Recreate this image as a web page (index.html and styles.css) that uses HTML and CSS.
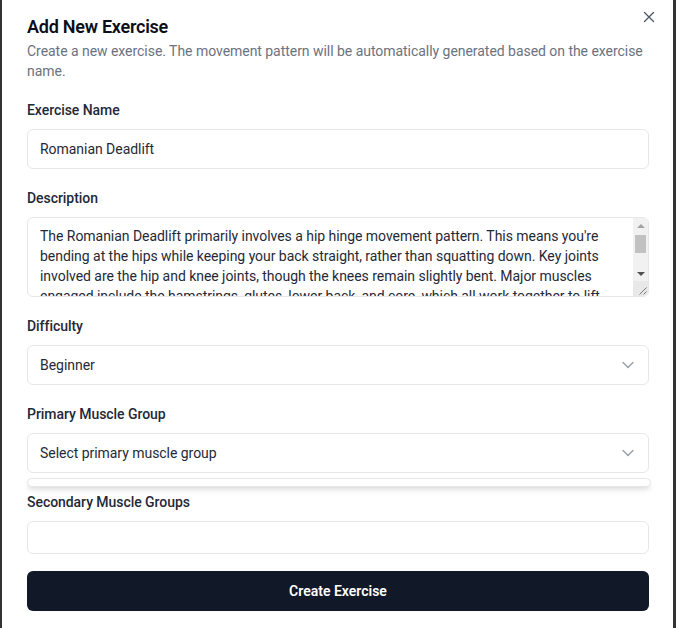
FILE: index.html
```html
<!DOCTYPE html>
<html lang="en">
<head>
<meta charset="utf-8">
<title>Add New Exercise</title>
<link rel="stylesheet" href="styles.css">
</head>
<body>
<div class="backdrop">
  <div class="dialog" role="dialog">
    <button class="close" type="button" aria-label="Close">
      <svg viewBox="0 0 12 12" width="12" height="12"><path d="M1.5 1.5 L10.5 10.5 M10.5 1.5 L1.5 10.5" fill="none" stroke="currentColor" stroke-width="1.3" stroke-linecap="round"/></svg>
    </button>
    <div class="header">
      <h2 class="title">Add New Exercise</h2>
      <p class="subtitle">Create a new exercise. The movement pattern will be automatically generated based on the exercise name.</p>
    </div>
    <form class="form">
      <div class="fields">
        <div class="field">
          <label class="label">Exercise Name</label>
          <input class="input" type="text" value="Romanian Deadlift">
        </div>
        <div class="field">
          <label class="label">Description</label>
          <div class="textarea-wrap">
            <textarea class="textarea">The Romanian Deadlift primarily involves a hip hinge movement pattern. This means you're bending at the hips while keeping your back straight, rather than squatting down. Key joints involved are the hip and knee joints, though the knees remain slightly bent. Major muscles engaged include the hamstrings, glutes, lower back, and core, which all work together to lift the weight and maintain proper form throughout the entire movement.</textarea>
            <div class="sb" aria-hidden="true">
              <div class="sb-btn"><span class="tri-up"></span></div>
              <div class="sb-thumb"></div>
              <div class="sb-space"></div>
              <div class="sb-btn"><span class="tri-down"></span></div>
            </div>
            <div class="resizer" aria-hidden="true">
              <svg viewBox="0 0 15 15" width="15" height="15"><path d="M13.5 6.5 L6.5 13.5 M13.5 10.5 L10.5 13.5" fill="none" stroke="#7a7a7a" stroke-width="1"/></svg>
            </div>
          </div>
        </div>
        <div class="field">
          <label class="label">Difficulty</label>
          <button class="select" type="button">
            <span>Beginner</span>
            <svg class="chev" viewBox="0 0 16 16" width="16" height="16"><path d="M3 5.5 L8 10.5 L13 5.5" fill="none" stroke="currentColor" stroke-width="1.3" stroke-linecap="round" stroke-linejoin="round"/></svg>
          </button>
        </div>
        <div class="field">
          <label class="label">Primary Muscle Group</label>
          <div class="select-wrap">
            <button class="select" type="button">
              <span>Select primary muscle group</span>
              <svg class="chev" viewBox="0 0 16 16" width="16" height="16"><path d="M3 5.5 L8 10.5 L13 5.5" fill="none" stroke="currentColor" stroke-width="1.3" stroke-linecap="round" stroke-linejoin="round"/></svg>
            </button>
            <div class="popover"></div>
          </div>
        </div>
        <div class="field">
          <label class="label">Secondary Muscle Groups</label>
          <div class="multi"></div>
        </div>
      </div>
      <button class="submit" type="button">Create Exercise</button>
    </form>
  </div>
</div>
</body>
</html>
```
FILE: styles.css
```css
* { box-sizing: border-box; }
html, body { margin: 0; padding: 0; }
body {
  background: #333333;
  font-family: Roboto, "Liberation Sans", sans-serif;
  color: #111827;
  height: 628px;
  overflow: hidden;
}
.backdrop {
  padding: 0 3px 0 2px;
}
.dialog {
  position: relative;
  background: #ffffff;
  padding: 18px 24px 24px 25px;
  min-height: 628px;
}
.close {
  position: absolute;
  top: 11px;
  right: 18px;
  width: 12px;
  height: 12px;
  padding: 0;
  border: 0;
  background: none;
  color: #4b5563;
  display: flex;
}
.header { display: flex; flex-direction: column; gap: 5px; }
.title {
  margin: 0;
  font-size: 18px;
  line-height: 18px;
  font-weight: 600;
  letter-spacing: -0.25px;
  color: #0b0f19;
}
.subtitle {
  margin: 0;
  font-size: 14px;
  line-height: 20px;
  color: #6b7280;
  letter-spacing: -0.04px;
}
.form { margin-top: 19px; display: flex; flex-direction: column; }
.fields { display: flex; flex-direction: column; gap: 19px; }
.field { display: flex; flex-direction: column; }
.label {
  font-size: 14px;
  line-height: 21px;
  font-weight: 500;
  margin-bottom: 8px;
  color: #1f2937;
  letter-spacing: -0.05px;
}
.input, .textarea, .select, .multi {
  width: 100%;
  border: 1px solid #e5e7eb;
  border-radius: 6px;
  background: #ffffff;
  font-family: inherit;
  font-size: 14px;
  color: #1f2937;
  letter-spacing: -0.04px;
}
.input { height: 40px; padding: 0 12px; outline: none; }
.textarea-wrap { position: relative; }
.textarea {
  height: 80px;
  padding: 8px 27px 8px 12px;
  line-height: 20px;
  resize: none;
  outline: none;
  overflow: hidden;
  display: block;
}
.sb {
  position: absolute;
  top: 1px;
  right: 1px;
  bottom: 16px;
  width: 15px;
  background: #f1f1f1;
  border-top-right-radius: 5px;
  display: flex;
  flex-direction: column;
}
.sb-btn {
  height: 15px;
  display: flex;
  align-items: center;
  justify-content: center;
  flex: none;
}
.tri-up {
  width: 0; height: 0;
  border-left: 4px solid transparent;
  border-right: 4px solid transparent;
  border-bottom: 4px solid #a3a3a3;
}
.tri-down {
  width: 0; height: 0;
  border-left: 4px solid transparent;
  border-right: 4px solid transparent;
  border-top: 4px solid #505050;
}
.sb-thumb {
  height: 18px;
  margin: 2px 2px 0;
  background: #c1c1c1;
  flex: none;
}
.sb-space { flex: 1; }
.resizer {
  position: absolute;
  right: 1px;
  bottom: 1px;
  width: 15px;
  height: 15px;
  background: #e8e8e8;
  border-bottom-right-radius: 5px;
  display: flex;
}
.select {
  height: 40px;
  padding: 0 12px;
  display: flex;
  align-items: center;
  justify-content: space-between;
  text-align: left;
}
.chev { color: #6b7280; opacity: 0.7; }
.select-wrap { position: relative; }
.popover {
  position: absolute;
  top: calc(100% + 5px);
  left: 0;
  right: -2px;
  height: 9px;
  border: 1px solid #e5e7eb;
  border-radius: 6px;
  background: #ffffff;
  box-shadow: 0 4px 6px -1px rgba(0,0,0,0.1), 0 2px 4px -2px rgba(0,0,0,0.1);
}
.multi { height: 33px; }
.submit {
  margin-top: 17px;
  height: 40px;
  width: 100%;
  border: 0;
  border-radius: 6px;
  background: #111827;
  color: #ffffff;
  font-family: inherit;
  font-size: 14px;
  font-weight: 600;
}
```
